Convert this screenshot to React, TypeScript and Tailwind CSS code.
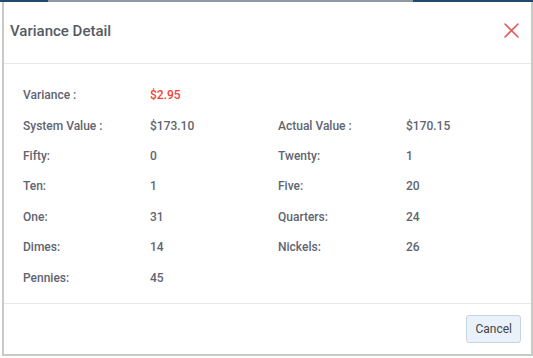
const ROWS: [string, string, string?, string?][] = [
  ["System Value :", "$173.10", "Actual Value :", "$170.15"],
  ["Fifty:", "0", "Twenty:", "1"],
  ["Ten:", "1", "Five:", "20"],
  ["One:", "31", "Quarters:", "24"],
  ["Dimes:", "14", "Nickels:", "26"],
  ["Pennies:", "45"],
];

const CELL = "flex h-[30.4px] items-center text-[12px] font-medium text-[#5f6470]";

function IconClose() {
  return (
    <svg width="15" height="15" viewBox="0 0 15 15" fill="none" aria-hidden>
      <path d="M1 1L14 14M14 1L1 14" stroke="#e25b5b" strokeWidth="1.6" strokeLinecap="round" />
    </svg>
  );
}

export default function App() {
  return (
    <div className="h-[358px] w-[533px] bg-white font-['Roboto',sans-serif]">
      <div className="flex h-[2px] w-full">
        <div className="w-[48px] bg-[#1f4b6e]" />
        <div className="w-[365px] bg-[#8d9aa6]" />
        <div className="flex-1 bg-[#1f4b6e]" />
      </div>
      <div className="ml-[2px] flex h-[354px] w-[531px] flex-col border-x-2 border-b-2 border-[#c5ccc5] bg-white">
        <div className="flex h-[62px] items-center justify-between border-b border-[#e9e9e9] pl-[6px] pr-[12px]">
          <h2 className="pb-[3px] text-[15px] font-medium text-[#555b66]">Variance Detail</h2>
          <button type="button" aria-label="Close" className="mb-[5px]">
            <IconClose />
          </button>
        </div>

        <div className="grid flex-1 grid-cols-[127px_128px_128px_1fr] content-start pl-[19px] pt-[16px]">
          <div className={CELL}>Variance :</div>
          <div className={`${CELL} font-bold text-[#f44336]`}>$2.95</div>
          <div />
          <div />
          {ROWS.map(([l1, v1, l2, v2]) => (
            <>
              <div key={l1} className={CELL}>{l1}</div>
              <div className={CELL}>{v1}</div>
              <div className={CELL}>{l2 ?? ""}</div>
              <div className={CELL}>{v2 ?? ""}</div>
            </>
          ))}
        </div>

        <div className="flex h-[51px] items-center justify-end border-t border-[#e9e9e9] pr-[10px] pb-[1px]">
          <button
            type="button"
            className="h-[28px] rounded-[3px] border border-[#c9d3de] bg-[#e9f1fb] px-[8px] text-[12px] text-[#444]"
          >
            Cancel
          </button>
        </div>
      </div>
    </div>
  );
}
